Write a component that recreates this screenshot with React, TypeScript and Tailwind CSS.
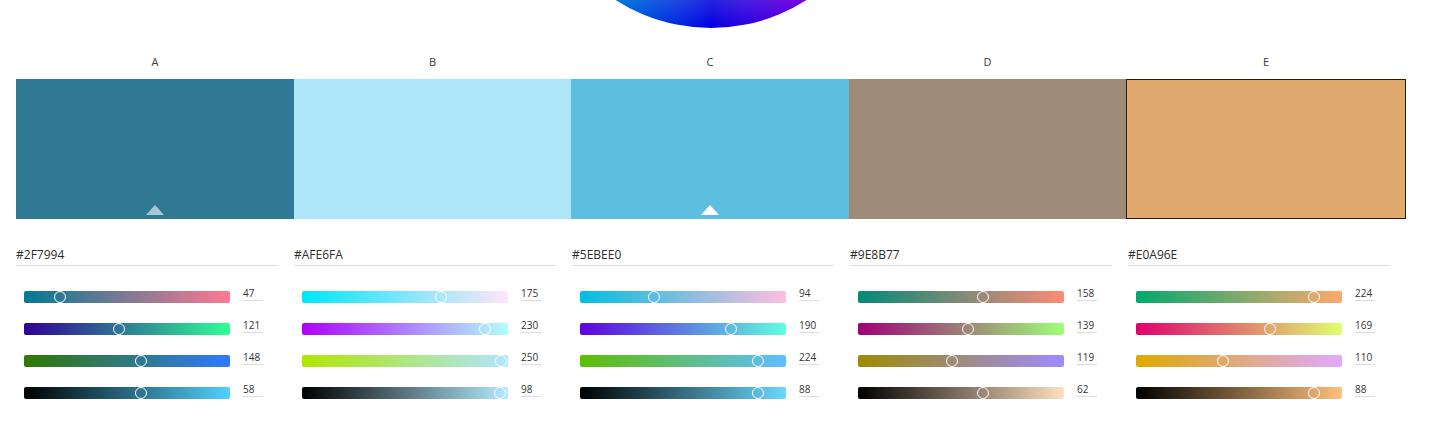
import type { CSSProperties } from "react";

type Swatch = { label: string; hex: string; marker?: "dim" | "base"; outlined?: boolean };

const swatches: Swatch[] = [
  { label: "A", hex: "2F7994", marker: "dim" },
  { label: "B", hex: "AFE6FA" },
  { label: "C", hex: "5EBEE0", marker: "base" },
  { label: "D", hex: "9E8B77" },
  { label: "E", hex: "E0A96E", outlined: true },
];

const rgb = (hex: string) => [0, 2, 4].map((i) => parseInt(hex.slice(i, i + 2), 16));
const css = (c: number[]) => `rgb(${c.map((v) => Math.round(v)).join(",")})`;

// R, G and B sweep one channel 0→255; the last row is HSB brightness in percent.
function channels(hex: string) {
  const c = rgb(hex);
  const max = Math.max(...c);
  const rows = c.map((v, i) => {
    const lo = [...c];
    const hi = [...c];
    lo[i] = 0;
    hi[i] = 255;
    return { value: v, max: 255, from: css(lo), to: css(hi) };
  });
  rows.push({
    value: Math.round((max / 255) * 100),
    max: 100,
    from: "rgb(0,0,0)",
    to: css(c.map((v) => (v * 255) / max)),
  });
  return rows;
}

function Slider({ value, max, from, to }: { value: number; max: number; from: string; to: string }) {
  const track: CSSProperties = { backgroundImage: `linear-gradient(to right, ${from}, ${to})` };
  return (
    <div className="flex items-start gap-[13px] pl-2">
      <div className="relative h-3 w-[206px] overflow-hidden rounded-[2px]" style={track}>
        <span
          className="absolute top-0 size-3 rounded-full border-[1.5px] border-white"
          style={{ left: (value / max) * 204 - 7.5 }}
        />
      </div>
      <div className="-mt-[4px] h-[14px] w-5 border-b border-[#dcdcdc] text-[10px] leading-[13px] text-[#333]">
        {value}
      </div>
    </div>
  );
}

export default function App() {
  return (
    <div className="min-h-[427px] bg-white pl-4 font-['Open_Sans',sans-serif]">
      <div className="w-[1390px]">
        <div className="flex h-[28px] items-end justify-center overflow-hidden">
          <div className="size-[354px] shrink-0 rounded-full bg-[radial-gradient(circle_closest-side,#ffffff,rgba(255,255,255,0)_100%),conic-gradient(#ffff00_0deg,#ff0000_60deg,#ff00ff_120deg,#0000ff_180deg,#00ffff_240deg,#00ff00_300deg,#ffff00_360deg)] brightness-[.88]" />
        </div>

        {/* swatch strip: the outlined swatch draws its border on the shared edge */}
        <div className="grid grid-cols-[278px_277px_278px_277px_280px] pt-[25px]">
          {swatches.map((s) => (
            <div key={s.label}>
              <div className="mb-2 h-[18px] text-center text-[11px] leading-[18px] text-[#3a3a3a]">{s.label}</div>
              <div
                className={`flex h-[140px] flex-col items-center justify-end pb-1 ${
                  s.outlined ? "border border-[#2a1d10]" : ""
                }`}
                style={{ backgroundColor: `#${s.hex}` }}
              >
                {s.marker && (
                  <svg width="18" height="10" viewBox="0 0 18 10">
                    <path d="M9 0L18 10H0Z" fill={s.marker === "base" ? "#ffffff" : "rgba(255,255,255,0.58)"} />
                  </svg>
                )}
              </div>
            </div>
          ))}
        </div>

        <div className="grid grid-cols-5">
          {swatches.map((s) => (
            <div key={s.label}>
              <div className="mt-[25px] mr-4 h-[22px] border-b border-[#dddddd] text-[12px] leading-[21px] text-[#2c2c2c]">
                #{s.hex}
              </div>

              <div className="mt-[25px] flex flex-col gap-5">
                {channels(s.hex).map((row, i) => (
                  <Slider key={i} {...row} />
                ))}
              </div>
            </div>
          ))}
        </div>
      </div>
    </div>
  );
}
